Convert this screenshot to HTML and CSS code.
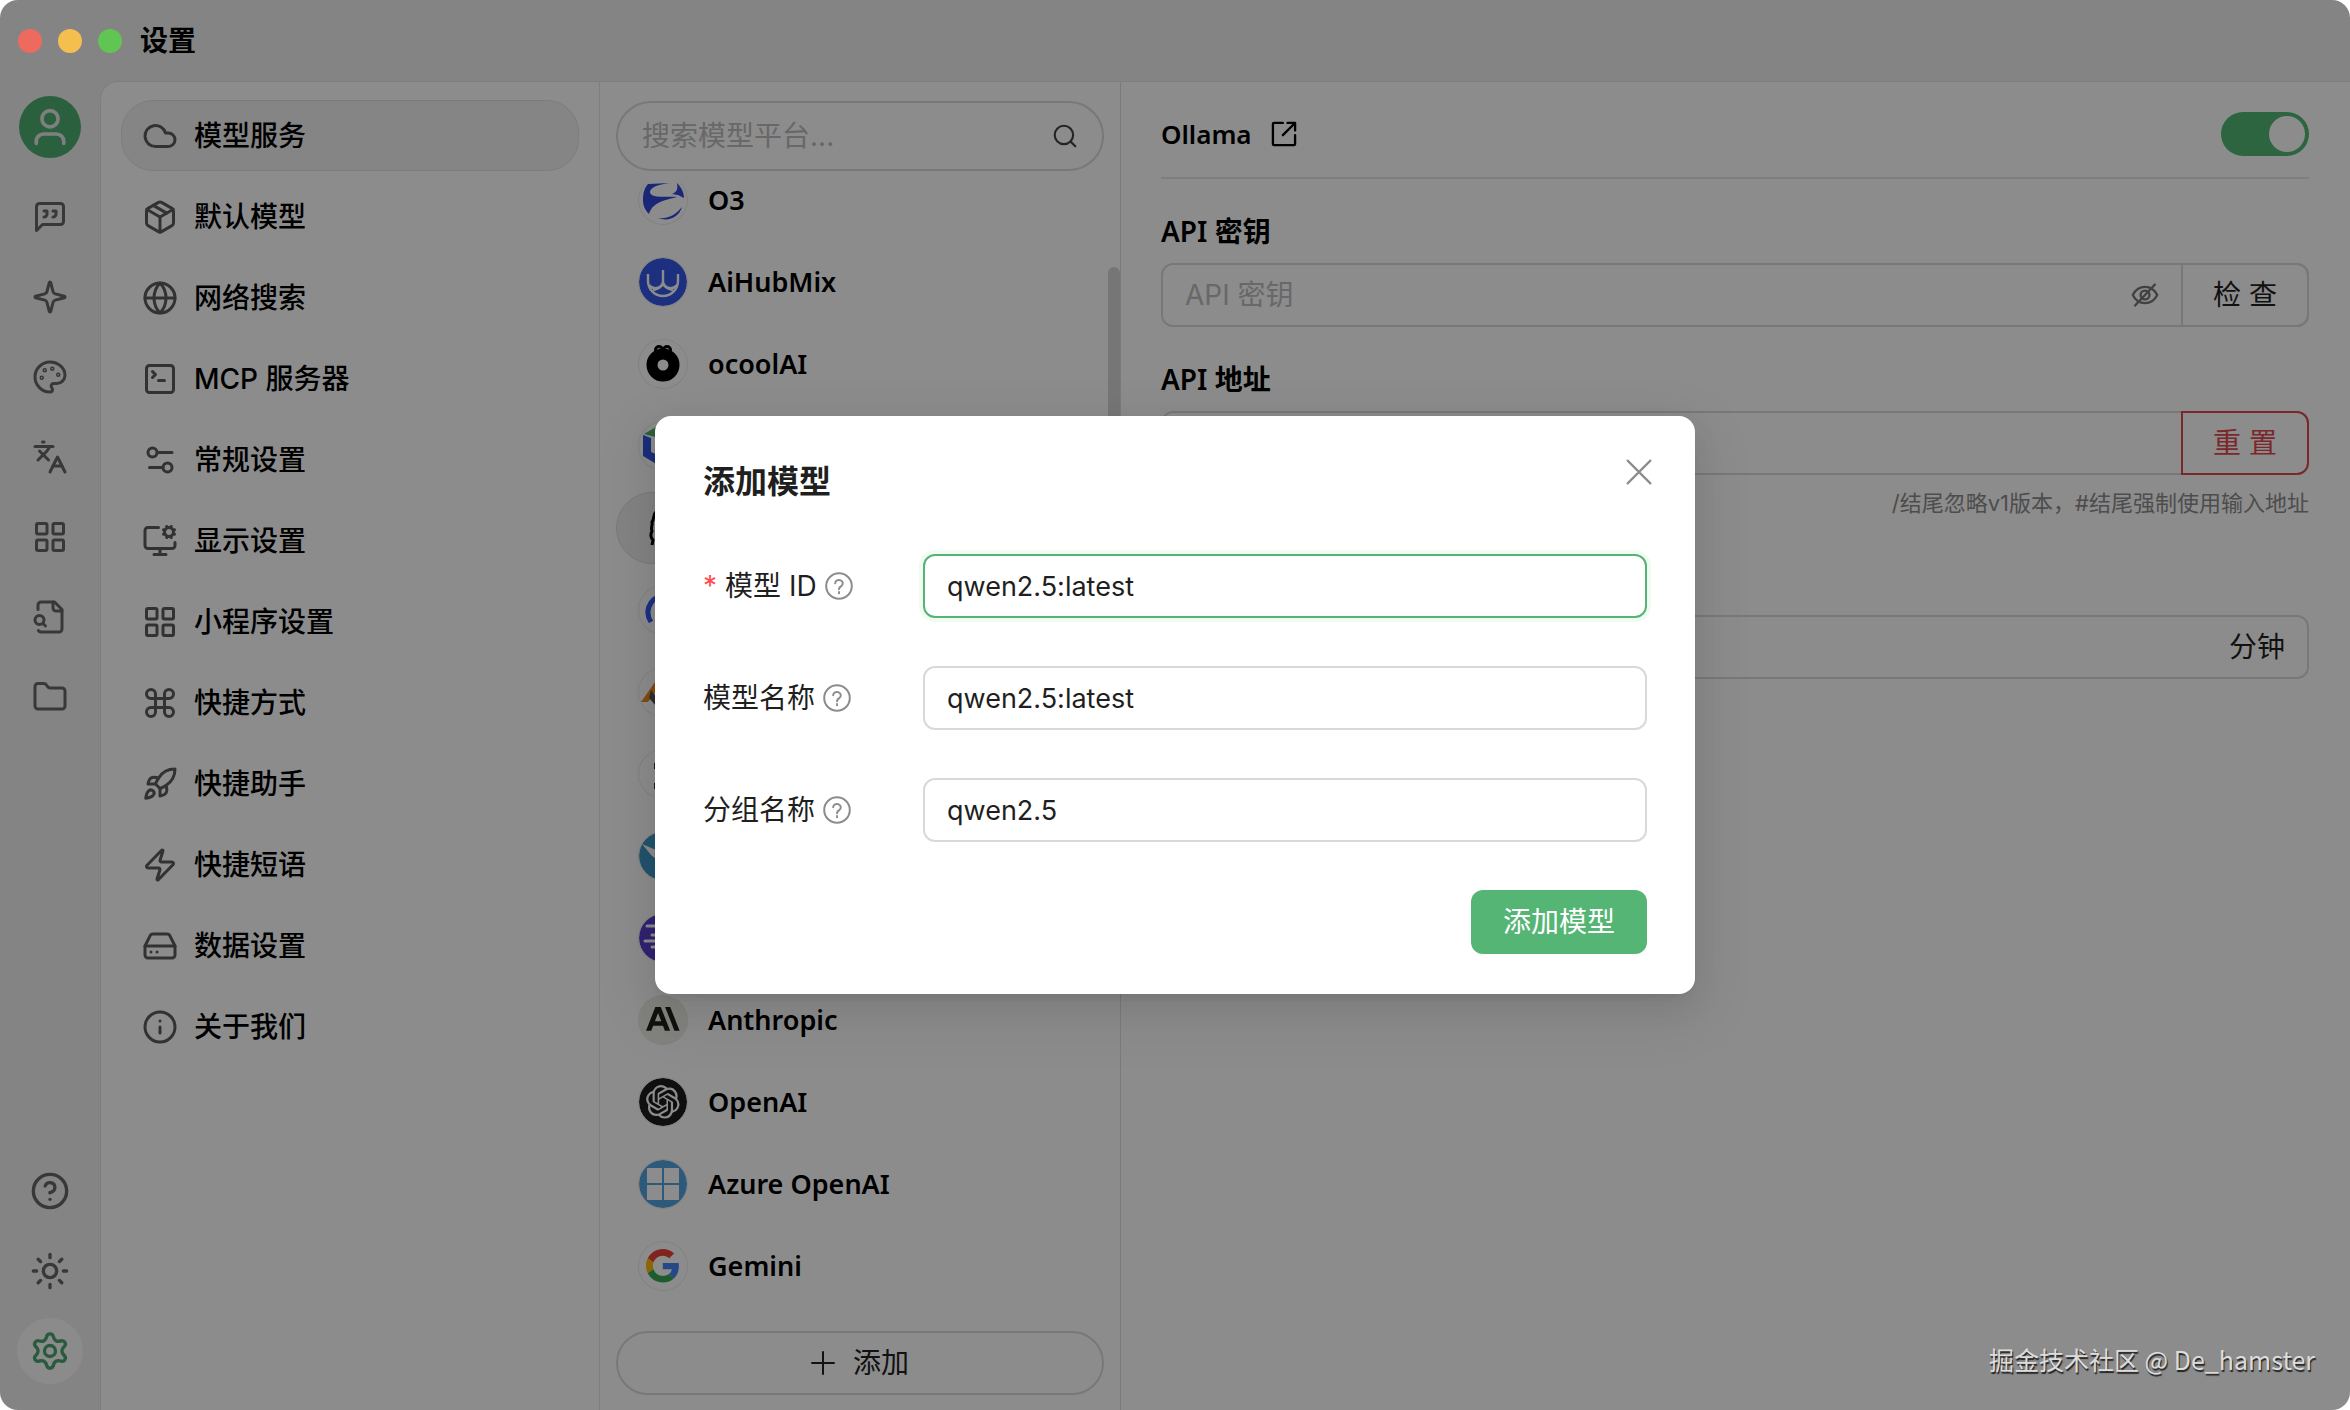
FILE: index.html
```html
<!DOCTYPE html>
<html lang="zh-CN">
<head>
<meta charset="utf-8">
<meta name="viewport" content="width=device-width, initial-scale=1">
<title>设置</title>
<link rel="stylesheet" href="styles.css">
</head>
<body>
<svg class="sprite" aria-hidden="true">
  <symbol id="i-user" viewBox="0 0 24 24"><circle cx="12" cy="7.5" r="4.4"/><path d="M4.5 21v-1.2a4 4 0 0 1 4-4h7a4 4 0 0 1 4 4V21"/></symbol>
  <symbol id="i-quote" viewBox="0 0 24 24"><path d="M21 15a2 2 0 0 1-2 2H7l-4 4V5a2 2 0 0 1 2-2h14a2 2 0 0 1 2 2z"/><path d="M8 12a2 2 0 0 0 2-2V8H8"/><path d="M14 12a2 2 0 0 0 2-2V8h-2"/></symbol>
  <symbol id="i-spark" viewBox="0 0 24 24"><path d="M9.937 15.5A2 2 0 0 0 8.5 14.063l-6.135-1.582a.5.5 0 0 1 0-.962L8.5 9.936A2 2 0 0 0 9.937 8.5l1.582-6.135a.5.5 0 0 1 .963 0L14.063 8.5A2 2 0 0 0 15.5 9.937l6.135 1.581a.5.5 0 0 1 0 .964L15.5 14.063a2 2 0 0 0-1.437 1.437l-1.582 6.135a.5.5 0 0 1-.963 0z"/></symbol>
  <symbol id="i-palette" viewBox="0 0 24 24"><circle cx="13.5" cy="6.5" r=".5"/><circle cx="17.5" cy="10.5" r=".5"/><circle cx="8.5" cy="7.5" r=".5"/><circle cx="6.5" cy="12.5" r=".5"/><path d="M12 2C6.5 2 2 6.5 2 12s4.5 10 10 10c.926 0 1.648-.746 1.648-1.688 0-.437-.18-.835-.437-1.125-.29-.289-.438-.652-.438-1.125a1.64 1.64 0 0 1 1.668-1.668h1.996c3.051 0 5.555-2.503 5.555-5.554C21.965 6.012 17.461 2 12 2z"/></symbol>
  <symbol id="i-lang" viewBox="0 0 24 24"><path d="m5 8 6 6"/><path d="m4 14 6-6 2-3"/><path d="M2 5h12"/><path d="M7 2h1"/><path d="m22 22-5-10-5 10"/><path d="M14 18h6"/></symbol>
  <symbol id="i-grid" viewBox="0 0 24 24"><rect width="7" height="7" x="3" y="3" rx="1"/><rect width="7" height="7" x="14" y="3" rx="1"/><rect width="7" height="7" x="14" y="14" rx="1"/><rect width="7" height="7" x="3" y="14" rx="1"/></symbol>
  <symbol id="i-file" viewBox="0 0 24 24"><path d="M14 2v4a2 2 0 0 0 2 2h4"/><path d="M4.268 21a2 2 0 0 0 1.727 1H18a2 2 0 0 0 2-2V7l-5-5H6a2 2 0 0 0-2 2v3"/><path d="m9 18-1.500-1.500"/><circle cx="5" cy="14" r="3"/></symbol>
  <symbol id="i-folder" viewBox="0 0 24 24"><path d="M20 20a2 2 0 0 0 2-2V8a2 2 0 0 0-2-2h-7.900a2 2 0 0 1-1.690-.900L9.600 3.900A2 2 0 0 0 7.930 3H4a2 2 0 0 0-2 2v13a2 2 0 0 0 2 2Z"/></symbol>
  <symbol id="i-help" viewBox="0 0 24 24"><circle cx="12" cy="12" r="10"/><path d="M9.090 9a3 3 0 0 1 5.830 1c0 2-3 3-3 3"/><path d="M12 17h.01"/></symbol>
  <symbol id="i-sun" viewBox="0 0 24 24"><circle cx="12" cy="12" r="4"/><path d="M12 2v2M12 20v2M4.930 4.930l1.410 1.410M17.660 17.660l1.410 1.410M2 12h2M20 12h2M6.340 17.660l-1.410 1.410M19.070 4.930l-1.410 1.410"/></symbol>
  <symbol id="i-gear" viewBox="-12 -12 24 24"><g id="tooth"><path d="M-2-8.600C-1.600-10.900 1.600-10.900 2-8.600C2.500-6.300 4.200-5.300 6.450-6.030"/></g><use href="#tooth" transform="rotate(60)"/><use href="#tooth" transform="rotate(120)"/><use href="#tooth" transform="rotate(180)"/><use href="#tooth" transform="rotate(240)"/><use href="#tooth" transform="rotate(300)"/><circle r="3.300"/></symbol>
  <symbol id="i-cloud" viewBox="0 0 24 24"><path d="M17.500 19H9a7 7 0 1 1 6.710-9h1.790a4.500 4.500 0 1 1 0 9Z"/></symbol>
  <symbol id="i-box" viewBox="0 0 24 24"><path d="M11 21.730a2 2 0 0 0 2 0l7-4A2 2 0 0 0 21 16V8a2 2 0 0 0-1-1.730l-7-4a2 2 0 0 0-2 0l-7 4A2 2 0 0 0 3 8v8a2 2 0 0 0 1 1.730z"/><path d="M12 22V12"/><path d="m3.300 7 8.700 5 8.700-5"/><path d="m7.500 4.270 9 5.150"/></symbol>
  <symbol id="i-globe" viewBox="0 0 24 24"><circle cx="12" cy="12" r="10"/><path d="M12 2a14.500 14.500 0 0 0 0 20 14.500 14.500 0 0 0 0-20"/><path d="M2 12h20"/></symbol>
  <symbol id="i-term" viewBox="0 0 24 24"><path d="m7 11 2-2-2-2"/><path d="M11 13h4"/><rect width="18" height="18" x="3" y="3" rx="2"/></symbol>
  <symbol id="i-sliders" viewBox="0 0 24 24"><path d="M20 7h-9"/><path d="M14 17H5"/><circle cx="17" cy="17" r="3"/><circle cx="7" cy="7" r="3"/></symbol>
  <symbol id="i-monitor" viewBox="0 0 24 24"><path d="M12 17v4M8 21h8"/><path d="M22 13v2a2 2 0 0 1-2 2H4a2 2 0 0 1-2-2V5a2 2 0 0 1 2-2h7"/><circle cx="18" cy="6" r="3"/><path d="m15.200 4.900-.900-.400M15.200 7.100l-.900.400M16.900 3.200l-.400-.900M16.900 8.800l-.400.900M19.100 3.200l.400-.900M19.100 8.800l.400.900M20.800 4.900l.900-.400M20.800 7.100l.900.400"/></symbol>
  <symbol id="i-cmd" viewBox="0 0 24 24"><path d="M15 6v12a3 3 0 1 0 3-3H6a3 3 0 1 0 3 3V6a3 3 0 1 0-3 3h12a3 3 0 1 0-3-3"/></symbol>
  <symbol id="i-rocket" viewBox="0 0 24 24"><path d="M4.500 16.500c-1.500 1.260-2 5-2 5s3.740-.500 5-2c.710-.840.700-2.130-.090-2.910a2.180 2.180 0 0 0-2.910-.090z"/><path d="m12 15-3-3a22 22 0 0 1 2-3.950A12.880 12.880 0 0 1 22 2c0 2.720-.780 7.500-6 11a22.350 22.350 0 0 1-4 2z"/><path d="M9 12H4s.550-3.030 2-4c1.620-1.080 5 0 5 0"/><path d="M12 15v5s3.030-.550 4-2c1.080-1.620 0-5 0-5"/></symbol>
  <symbol id="i-zap" viewBox="0 0 24 24"><path d="M4 14a1 1 0 0 1-.780-1.630l9.900-10.200a.500.500 0 0 1 .860.460l-1.920 6.020A1 1 0 0 0 13 10h7a1 1 0 0 1 .780 1.630l-9.900 10.200a.500.500 0 0 1-.860-.460l1.920-6.020A1 1 0 0 0 11 14z"/></symbol>
  <symbol id="i-drive" viewBox="0 0 24 24"><path d="M22 12H2"/><path d="M5.450 5.110 2 12v6a2 2 0 0 0 2 2h16a2 2 0 0 0 2-2v-6l-3.450-6.890A2 2 0 0 0 16.760 4H7.240a2 2 0 0 0-1.790 1.110z"/><path d="M6 16h.01M10 16h.01"/></symbol>
  <symbol id="i-info" viewBox="0 0 24 24"><circle cx="12" cy="12" r="10"/><path d="M12 16v-4M12 8h.01"/></symbol>
  <symbol id="i-search" viewBox="0 0 24 24"><circle cx="11" cy="11" r="8.500"/><path d="m21.500 21.500-4.300-4.300"/></symbol>
  <symbol id="i-plus" viewBox="0 0 24 24"><path d="M12 1v22M1 12h22"/></symbol>
  <symbol id="i-export" viewBox="0 0 24 24"><path d="M11 2.500H3.500a1 1 0 0 0-1 1v17a1 1 0 0 0 1 1h17a1 1 0 0 0 1-1V13M15 2.500h6.500V9M21 3 11 13"/></symbol>
  <symbol id="i-eyeoff" viewBox="0 0 24 24"><path d="M1.500 12C4 7 7.500 5 12 5s8 2 10.500 7c-2.500 5-6 7-10.500 7s-8-2-10.500-7z"/><circle cx="12" cy="12" r="3.800"/><path d="M3.500 21 20.500 3"/></symbol>
  <symbol id="i-close" viewBox="0 0 24 24"><path d="m1.500 1.500 21 21M22.500 1.500l-21 21"/></symbol>
  <symbol id="i-question" viewBox="0 0 28 28"><circle cx="14" cy="14" r="12.800"/><path d="M10.200 11.300a3.800 3.400 0 1 1 6 2.800c-1.400.900-2.200 1.500-2.200 3.200M14 20v1.200"/></symbol>
</svg>

<div class="window">
  <header class="titlebar">
    <div class="lights"><i class="light red"></i><i class="light yellow"></i><i class="light green"></i></div>
    <h1 class="title">设置</h1>
  </header>

  <div class="body">
    <nav class="rail" aria-label="主导航">
      <a class="avatar" href="#" aria-label="用户"><svg class="ico"><use href="#i-user"/></svg></a>
      <a class="rail-item" href="#" aria-label="助手"><svg class="ico"><use href="#i-quote"/></svg></a>
      <a class="rail-item" href="#" aria-label="智能体"><svg class="ico"><use href="#i-spark"/></svg></a>
      <a class="rail-item" href="#" aria-label="绘画"><svg class="ico"><use href="#i-palette"/></svg></a>
      <a class="rail-item" href="#" aria-label="翻译"><svg class="ico"><use href="#i-lang"/></svg></a>
      <a class="rail-item" href="#" aria-label="小程序"><svg class="ico"><use href="#i-grid"/></svg></a>
      <a class="rail-item" href="#" aria-label="知识库"><svg class="ico"><use href="#i-file"/></svg></a>
      <a class="rail-item" href="#" aria-label="文件"><svg class="ico"><use href="#i-folder"/></svg></a>
      <a class="rail-item large bottom" href="#" aria-label="帮助"><svg class="ico"><use href="#i-help"/></svg></a>
      <a class="rail-item large" href="#" aria-label="主题"><svg class="ico"><use href="#i-sun"/></svg></a>
      <a class="rail-item large current" href="#" aria-label="设置"><svg class="ico"><use href="#i-gear"/></svg></a>
    </nav>

    <main class="content">
      <nav class="menu" aria-label="设置菜单">
        <a class="menu-item current" href="#"><svg class="ico"><use href="#i-cloud"/></svg>模型服务</a>
        <a class="menu-item" href="#"><svg class="ico"><use href="#i-box"/></svg>默认模型</a>
        <a class="menu-item" href="#"><svg class="ico"><use href="#i-globe"/></svg>网络搜索</a>
        <a class="menu-item" href="#"><svg class="ico"><use href="#i-term"/></svg>MCP 服务器</a>
        <a class="menu-item" href="#"><svg class="ico"><use href="#i-sliders"/></svg>常规设置</a>
        <a class="menu-item" href="#"><svg class="ico"><use href="#i-monitor"/></svg>显示设置</a>
        <a class="menu-item" href="#"><svg class="ico"><use href="#i-grid"/></svg>小程序设置</a>
        <a class="menu-item" href="#"><svg class="ico"><use href="#i-cmd"/></svg>快捷方式</a>
        <a class="menu-item" href="#"><svg class="ico"><use href="#i-rocket"/></svg>快捷助手</a>
        <a class="menu-item" href="#"><svg class="ico"><use href="#i-zap"/></svg>快捷短语</a>
        <a class="menu-item" href="#"><svg class="ico"><use href="#i-drive"/></svg>数据设置</a>
        <a class="menu-item" href="#"><svg class="ico"><use href="#i-info"/></svg>关于我们</a>
      </nav>

      <section class="providers">
        <label class="search"><input type="text" placeholder="搜索模型平台..." aria-label="搜索模型平台"><svg class="ico"><use href="#i-search"/></svg></label>
        <div class="list">
          <div class="list-inner">
            <a class="provider" href="#"><svg class="logo" viewBox="0 0 48 48"><path fill="#3148d8" d="M4 24C4 16 6 11 9 8l22-1c-10 1-20 4-20 9 0 7 20 4 27 5-10 3-24 4-28 17C5 33 4 28 4 24zM38 7c4 4 7 9 7 15l-6-3-6-1c5-2 6-5 5-11zM19 42c12 1 18-4 24-11-3 10-13 15-24 11z"/></svg>O3</a>
            <a class="provider" href="#"><svg class="logo" viewBox="0 0 48 48"><circle cx="24" cy="24" r="24" fill="#3358e8"/><path fill="none" stroke="#fff" stroke-width="2.400" d="M9 16v7a15 15 0 0 0 30 0v-7M10 27c4 5 12 4 14-3 2 7 10 8 14 3M24 12v14M14 32c5-1 8-3 10-6 2 3 5 5 10 6"/></svg>AiHubMix</a>
            <a class="provider" href="#"><svg class="logo" viewBox="0 0 48 48"><g fill="none" stroke="#000" stroke-width="3"><circle cx="20" cy="10" r="3.500"/><circle cx="28" cy="10" r="3.500"/></g><circle cx="24" cy="25" r="11" fill="none" stroke="#000" stroke-width="11"/></svg>ocoolAI</a>
            <a class="provider" href="#" aria-label="模型平台"><svg class="logo" viewBox="0 0 48 48"><path fill="#4fae6b" d="M5 12 24 1l19 11-19 5z"/><path fill="#3157e0" d="M4 13l8 3v14l12 5v11L4 34z"/></svg></a>
            <a class="provider current" href="#" aria-label="Ollama"><svg class="logo" viewBox="0 0 48 48"><path fill="none" stroke="#000" stroke-width="3" d="M17 8c-4 3-1 7-4 10 1 4-2 6 0 9-2 4-1 7 1 9l-1 5M31 8c4 3 1 7 4 10"/></svg></a>
            <a class="provider" href="#" aria-label="模型平台"><svg class="logo" viewBox="0 0 48 48"><path fill="none" stroke="#3358f0" stroke-width="5" d="M12 36C3 22 16 8 26 10"/></svg></a>
            <a class="provider" href="#" aria-label="模型平台"><svg class="logo" viewBox="0 0 48 48"><path fill="#f08a1c" d="M2 34 16 14h8L9 34z"/><path fill="#555" d="m12 22 12 16h-7l-7-8z"/></svg></a>
            <a class="provider" href="#" aria-label="模型平台"><svg class="logo" viewBox="0 0 48 48"><path fill="#5a1c66" d="M15 13h6v6h-6zM15 33h6v6h-6z"/></svg></a>
            <a class="provider" href="#" aria-label="模型平台"><svg class="logo" viewBox="0 0 48 48"><circle cx="24" cy="24" r="24" fill="#3f97c8"/><path fill="#fff" d="M3 12l21 9v3l-9-3 9 10-11-7z"/></svg></a>
            <a class="provider" href="#" aria-label="模型平台"><svg class="logo" viewBox="0 0 48 48"><circle cx="24" cy="24" r="24" fill="#5b3fd0"/><path fill="none" stroke="#fff" stroke-width="3" stroke-linecap="round" d="M8 12h16M13 21h11M6 27h18M13 33h11"/></svg></a>
            <a class="provider" href="#"><svg class="logo sand" viewBox="0 0 48 48"><path transform="translate(7 6) scale(1.400)" fill="#1f1f1e" d="M17.304 3.541h-3.672l6.696 16.918H24ZM6.696 3.541 0 20.459h3.744l1.370-3.553h7.005l1.369 3.553h3.744L10.536 3.541Zm-.371 10.223 2.291-5.945 2.292 5.945Z"/></svg>Anthropic</a>
            <a class="provider" href="#"><svg class="logo" viewBox="0 0 48 48"><circle cx="24" cy="24" r="24" fill="#1c1c1c"/><path transform="translate(7 7) scale(1.400)" fill="#fff" d="M22.2819 9.8211a5.9847 5.9847 0 0 0-.5157-4.9108 6.0462 6.0462 0 0 0-6.5098-2.9A6.0651 6.0651 0 0 0 4.9807 4.1818a5.9847 5.9847 0 0 0-3.9977 2.9 6.0462 6.0462 0 0 0 .7427 7.0966 5.98 5.98 0 0 0 .511 4.9107 6.051 6.051 0 0 0 6.5146 2.9001A5.9847 5.9847 0 0 0 13.2599 24a6.0557 6.0557 0 0 0 5.7718-4.2058 5.9894 5.9894 0 0 0 3.9977-2.9001 6.0557 6.0557 0 0 0-.7475-7.0729zm-9.022 12.6081a4.4755 4.4755 0 0 1-2.8764-1.0408l.1419-.0804 4.7783-2.7582a.7948.7948 0 0 0 .3927-.6813v-6.7369l2.02 1.1686a.071.071 0 0 1 .038.052v5.5826a4.504 4.504 0 0 1-4.4945 4.4944zm-9.6607-4.1254a4.4708 4.4708 0 0 1-.5346-3.0137l.142.0852 4.783 2.7582a.7712.7712 0 0 0 .7806 0l5.8428-3.3685v2.3324a.0804.0804 0 0 1-.0332.0615L9.74 19.9502a4.4992 4.4992 0 0 1-6.1408-1.6464zM2.3408 7.8956a4.485 4.485 0 0 1 2.3655-1.9728V11.6a.7664.7664 0 0 0 .3879.6765l5.8144 3.3543-2.0201 1.1685a.0757.0757 0 0 1-.071 0l-4.8303-2.7865A4.504 4.504 0 0 1 2.3408 7.872zm16.5963 3.8558L13.1038 8.364 15.1192 7.2a.0757.0757 0 0 1 .071 0l4.8303 2.7913a4.4944 4.4944 0 0 1-.6765 8.1042v-5.6772a.79.79 0 0 0-.407-.667zm2.0107-3.0231l-.142-.0852-4.7735-2.7818a.7759.7759 0 0 0-.7854 0L9.409 9.2297V6.8974a.0662.0662 0 0 1 .0284-.0615l4.8303-2.7866a4.4992 4.4992 0 0 1 6.6802 4.66zM8.3065 12.863l-2.02-1.1638a.0804.0804 0 0 1-.038-.0567V6.0742a4.4992 4.4992 0 0 1 7.3757-3.4537l-.142.0805L8.704 5.459a.7948.7948 0 0 0-.3927.6813zm1.0976-2.3654l2.602-1.4998 2.6069 1.4998v2.9994l-2.5974 1.4997-2.6067-1.4997Z"/></svg>OpenAI</a>
            <a class="provider" href="#"><svg class="logo" viewBox="0 0 48 48"><circle cx="24" cy="24" r="24" fill="#53a3de"/><path fill="#fff" d="M8 8h15v15H8zM25 8h15v15H25zM8 25h15v15H8zM25 25h15v15H25z"/></svg>Azure OpenAI</a>
            <a class="provider" href="#"><svg class="logo" viewBox="0 0 48 48"><g transform="translate(7 7) scale(.700)"><path fill="#ea4335" d="M24 9.500c3.540 0 6.710 1.220 9.210 3.600l6.850-6.850C35.900 2.380 30.470 0 24 0 14.620 0 6.510 5.380 2.560 13.220l7.980 6.190C12.430 13.720 17.740 9.500 24 9.500z"/><path fill="#4285f4" d="M46.980 24.550c0-1.570-.150-3.090-.380-4.550H24v9.020h12.940c-.580 2.960-2.260 5.480-4.780 7.180l7.730 6c4.510-4.180 7.090-10.360 7.090-17.650z"/><path fill="#fbbc05" d="M10.530 28.590c-.480-1.450-.760-2.990-.760-4.590s.270-3.140.760-4.590l-7.980-6.190C.920 16.460 0 20.120 0 24c0 3.880.920 7.540 2.560 10.780l7.970-6.190z"/><path fill="#34a853" d="M24 48c6.480 0 11.930-2.130 15.890-5.810l-7.730-6c-2.150 1.450-4.920 2.300-8.160 2.300-6.260 0-11.570-4.220-13.470-9.910l-7.980 6.190C6.510 42.620 14.620 48 24 48z"/></g></svg>Gemini</a>
          </div>
        </div>
        <div class="thumb"></div>
        <button class="add" type="button"><svg class="ico"><use href="#i-plus"/></svg>添加</button>
      </section>

      <section class="detail">
        <div class="detail-head">
          <h2 class="name">Ollama</h2>
          <a class="ext" href="#" aria-label="打开官网"><svg class="ico"><use href="#i-export"/></svg></a>
          <input class="toggle" type="checkbox" role="switch" aria-label="启用" checked>
        </div>
        <label class="field-label" for="key">API 密钥</label>
        <div class="group">
          <input class="box" id="key" type="text" placeholder="API 密钥">
          <svg class="ico eye"><use href="#i-eyeoff"/></svg>
          <button class="side" type="button">检 查</button>
        </div>
        <label class="field-label" for="host">API 地址</label>
        <div class="group">
          <input class="box" id="host" type="text">
          <button class="side danger" type="button">重 置</button>
        </div>
        <p class="hint">/结尾忽略v1版本，#结尾强制使用输入地址</p>
        <div class="group minutes">
          <input class="box" type="text" aria-label="分钟">
          <span class="unit">分钟</span>
        </div>
      </section>
    </main>
  </div>

  <div class="backdrop">
    <form class="dialog" role="dialog" aria-labelledby="dlg-title">
      <button class="close" type="button" aria-label="关闭"><svg class="ico"><use href="#i-close"/></svg></button>
      <h2 class="dialog-title" id="dlg-title">添加模型</h2>
      <div class="row">
        <label class="row-label" for="mid"><span class="star">*</span>模型 ID<svg class="ico"><use href="#i-question"/></svg></label>
        <input class="row-input focused" id="mid" type="text" value="qwen2.5:latest">
      </div>
      <div class="row">
        <label class="row-label" for="mname">模型名称<svg class="ico"><use href="#i-question"/></svg></label>
        <input class="row-input" id="mname" type="text" value="qwen2.5:latest">
      </div>
      <div class="row">
        <label class="row-label" for="gname">分组名称<svg class="ico"><use href="#i-question"/></svg></label>
        <input class="row-input" id="gname" type="text" value="qwen2.5">
      </div>
      <button class="submit" type="button">添加模型</button>
    </form>
  </div>
  <div class="watermark">掘金技术社区 @ De_hamster</div>
</div>
</body>
</html>
```

FILE: styles.css
```css
* { box-sizing: border-box; }

body {
  margin: 0;
  background: #fff;
  color: #000;
  font-family: Inter, "Noto Sans CJK SC", sans-serif;
  font-size: 28px;
  line-height: 40px;
}

a { color: inherit; text-decoration: none; }
h1, h2, p { margin: 0; }
button, input { font: inherit; color: inherit; }
input { outline: none; min-width: 0; }
button { cursor: pointer; }

.sprite { position: absolute; width: 0; height: 0; }

.ico {
  display: block;
  flex: none;
  width: 36px;
  height: 36px;
  fill: none;
  stroke: currentColor;
  stroke-width: 2;
  stroke-linecap: round;
  stroke-linejoin: round;
}

.window {
  position: relative;
  display: flex;
  flex-direction: column;
  height: 100vh;
  border-radius: 18px;
  overflow: hidden;
  background: #f0f0f0;
}

/* Title bar */
.titlebar {
  display: flex;
  align-items: center;
  gap: 18px;
  height: 81px;
  padding-left: 18px;
}
.lights { position: relative; z-index: 3; display: flex; gap: 16px; }
.light { width: 24px; height: 24px; border-radius: 50%; }
.red { background: #ee6a5f; }
.yellow { background: #f5bf4f; }
.green { background: #61c554; }
.title { font-size: 28px; font-weight: 600; }

.body { flex: 1; display: flex; min-height: 0; }

/* Icon rail */
.rail {
  flex: none;
  width: 100px;
  display: flex;
  flex-direction: column;
  align-items: center;
  gap: 14px;
  padding: 15px 0 26px;
  color: #666;
}
.avatar {
  display: grid;
  place-items: center;
  width: 62px;
  height: 62px;
  margin-bottom: 12px;
  border-radius: 50%;
  background: #4fb074;
  color: #e8e8e8;
}
.avatar .ico { width: 44px; height: 44px; }
.rail-item {
  display: grid;
  place-items: center;
  width: 66px;
  height: 66px;
  border-radius: 50%;
}
.large .ico { width: 40px; height: 40px; }
.bottom { margin-top: auto; }
.rail-item.current { background: #fdfdfd; color: #4aa570; }

/* Settings menu */
.content {
  flex: 1;
  display: flex;
  min-width: 0;
  border: solid #e6e6e6;
  border-width: 1px 0 0 1px;
  border-top-left-radius: 18px;
  background: #fff;
}
.menu {
  flex: none;
  width: 499px;
  display: flex;
  flex-direction: column;
  gap: 10px;
  padding: 18px 20px;
  border-right: 1px solid #e6e6e6;
}
.menu-item {
  display: flex;
  align-items: center;
  gap: 16px;
  height: 71px;
  padding: 0 20px;
  border: 1px solid transparent;
  border-radius: 32px;
  font-weight: 500;
}
.menu-item .ico { color: #5c5c5c; }
.menu-item.current { background: #f2f2f2; border-color: #e2e2e2; }

/* Provider list */
.providers {
  position: relative;
  flex: none;
  width: 521px;
  display: flex;
  flex-direction: column;
  padding: 19px 16px 15px;
  border-right: 1px solid #e0e0e0;
}
.search {
  display: flex;
  align-items: center;
  height: 70px;
  padding: 0 24px;
  border: 2px solid #dadada;
  border-radius: 35px;
}
.search input { flex: 1; border: 0; padding: 0; background: none; }
.search .ico { width: 26px; height: 26px; color: #444; }
::placeholder { color: #bdbdbd; opacity: 1; }
.list { flex: 1; min-height: 0; margin: 12px 0 10px; overflow: hidden; }
.list-inner { display: flex; flex-direction: column; gap: 10px; margin-top: -19px; }
.provider {
  flex: none;
  display: flex;
  align-items: center;
  gap: 21px;
  height: 72px;
  padding: 0 22px;
  border: 1px solid transparent;
  border-radius: 36px;
  font-family: "Noto Sans", sans-serif;
  font-size: 27px;
  line-height: 32px;
  font-weight: 600;
}
.provider.current { background: #efefef; border-color: #dcdcdc; }
.logo {
  flex: none;
  width: 48px;
  height: 48px;
  border-radius: 50%;
  box-shadow: 0 0 0 1px #ececec;
}
.sand { background: #edede6; }
.thumb {
  position: absolute;
  top: 185px;
  right: 0;
  width: 12px;
  height: 540px;
  border-radius: 6px;
  background: #d8d8d8;
}
.add {
  display: flex;
  align-items: center;
  justify-content: center;
  gap: 18px;
  height: 64px;
  border: 2px solid #dadada;
  border-radius: 32px;
  background: none;
  color: #222;
}
.add .ico { width: 24px; height: 24px; }

/* Provider detail */
.detail {
  flex: 1;
  min-width: 0;
  display: flex;
  flex-direction: column;
  padding: 9px 41px 0 40px;
}
.detail-head {
  display: flex;
  align-items: center;
  gap: 18px;
  height: 88px;
  border-bottom: 2px solid #e6e6e6;
}
.name { font-family: "Noto Sans", sans-serif; font-size: 26px; font-weight: 600; }
.ext .ico { width: 28px; height: 28px; }
.toggle {
  appearance: none;
  width: 88px;
  height: 44px;
  margin: 0 0 0 auto;
  padding: 4px;
  border-radius: 22px;
  background: #50b876;
}
.toggle::before {
  content: "";
  display: block;
  width: 36px;
  height: 36px;
  margin-left: auto;
  border-radius: 50%;
  background: #fff;
}
.field-label {
  margin: 32px 0 12px;
  font-family: "Noto Sans", "Noto Sans CJK SC", sans-serif;
  font-weight: 600;
}
.group {
  display: flex;
  align-items: stretch;
  height: 64px;
  border: 2px solid #dadada;
  border-radius: 12px;
  color: #1f1f1f;
}
.box { flex: 1; padding: 0 22px; border: 0; background: none; }
.eye { align-self: center; width: 28px; height: 28px; margin-right: 24px; color: #777; }
.side {
  width: 128px;
  margin: -2px;
  padding: 0;
  border: 2px solid #dadada;
  border-radius: 0 12px 12px 0;
  background: none;
}
.danger { border-color: #e04a50; color: #e04a50; }
.hint { margin-top: 8px; font-size: 22px; text-align: right; color: #8c8c8c; }
.minutes { margin-top: 92px; }
.unit { align-self: center; padding-right: 22px; }

/* Add-model dialog */
.backdrop {
  position: absolute;
  inset: 0;
  z-index: 2;
  display: grid;
  place-items: center;
  background: rgba(0, 0, 0, .45);
}
.dialog {
  position: relative;
  display: flex;
  flex-direction: column;
  gap: 48px;
  width: 1040px;
  padding: 40px 48px;
  border-radius: 16px;
  background: #fff;
  color: #1f1f1f;
  box-shadow: 0 12px 32px rgba(0, 0, 0, .08), 0 6px 12px -8px rgba(0, 0, 0, .12), 0 18px 56px 16px rgba(0, 0, 0, .05);
}
.close {
  position: absolute;
  top: 40px;
  right: 40px;
  display: grid;
  place-items: center;
  width: 32px;
  height: 32px;
  padding: 0;
  border: 0;
  background: none;
  color: #8c8c8c;
}
.close .ico { width: 26px; height: 26px; }
.dialog-title { margin-top: 2px; font-size: 32px; line-height: 48px; font-weight: 600; }
.row { display: flex; align-items: center; height: 64px; }
.row-label { display: flex; align-items: center; flex: none; width: 220px; }
.row-label .ico { width: 28px; height: 28px; margin-left: 8px; color: #8c8c8c; }
.star { margin-right: 8px; color: #ff4d4f; }
.row-input {
  flex: 1;
  height: 64px;
  padding: 0 22px;
  border: 2px solid #d9d9d9;
  border-radius: 12px;
  background: #fff;
  font-size: 27px;
}
.focused { border-color: #55b475; box-shadow: 0 0 0 4px rgba(60, 220, 80, .08); }
.submit {
  align-self: flex-end;
  width: 176px;
  height: 64px;
  padding: 0;
  border: 0;
  border-radius: 12px;
  background: #55b574;
  color: #fff;
}

.watermark {
  position: absolute;
  right: 35px;
  bottom: 31px;
  z-index: 3;
  font-family: "Noto Sans CJK SC", sans-serif;
  font-size: 25px;
  color: #dcdcdc;
  text-shadow: 1px 2px 1px #222;
}
```
